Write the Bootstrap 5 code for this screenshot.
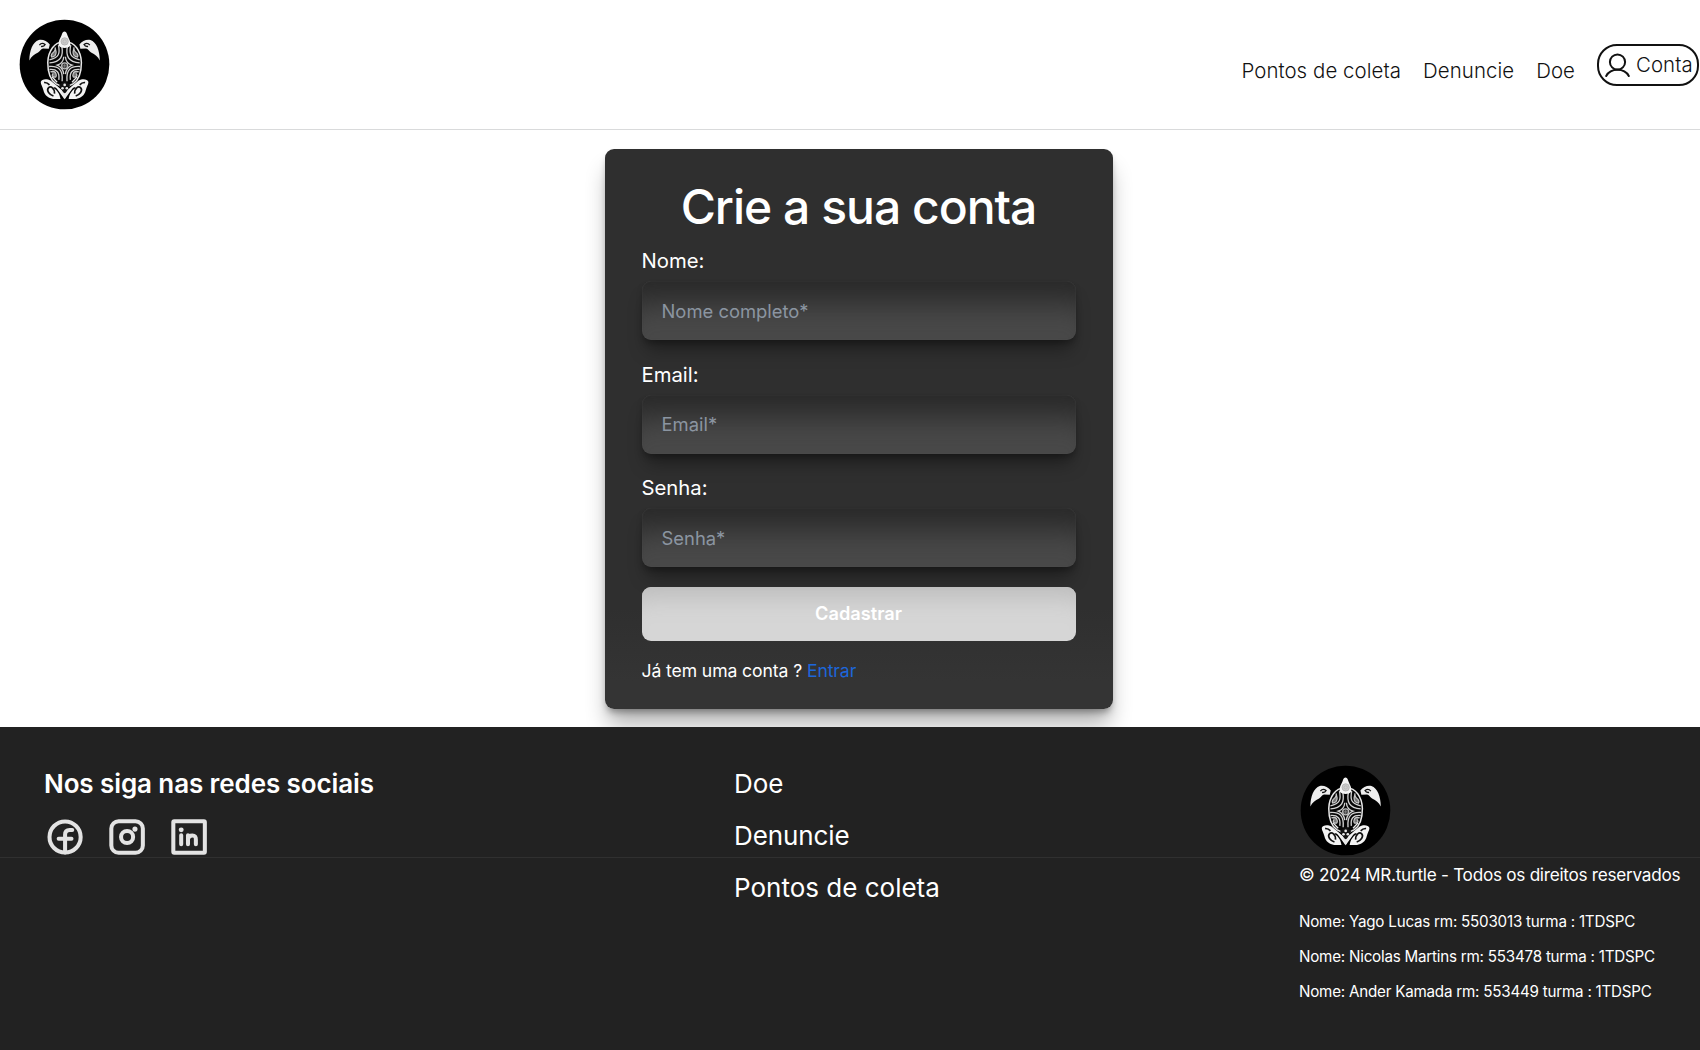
<!DOCTYPE html>
<html lang="pt-br">
<head>
<meta charset="utf-8">
<meta name="viewport" content="width=device-width, initial-scale=1">
<title>MR.turtle - Crie a sua conta</title>
<link rel="stylesheet" href="https://cdn.jsdelivr.net/npm/bootstrap@5.3.0/dist/css/bootstrap.min.css">
<style>
  body { font-family: Inter, "Liberation Sans", sans-serif; background: #fff; color: #fff; height: 1050px; overflow: hidden; }
  .site-head { height: 130px; border-bottom: 1px solid #d9dadb; padding: 19px 1px 0 19px; }
  .turtle { width: 91px; height: 91px; display: block; }
  .site-nav { gap: 22px; padding-top: 25px; font-size: 20.4px; line-height: 30px; }
  .site-nav a { color: #111; font-weight: 350; letter-spacing: .08px; text-decoration: none; white-space: nowrap; }
  .site-nav .plain { margin-top: 12px; }
  .site-nav .account { width: 102px; height: 42px; border: 2px solid #111; border-radius: 20px; padding-left: 6px; gap: 6px; }
  .stage { height: 597px; padding: 19px 0 0 17px; overflow: hidden; }
  .signup { width: 508px; height: 560px; background: linear-gradient(#2f2f2f 0 82%, #343434 95%); border-radius: 9px; padding: 30px 37px 0; box-shadow: 0 18px 22px -3px rgba(0,0,0,.3), 0 5px 7px -2px rgba(0,0,0,.35); }
  .signup h1 { font-size: 48px; font-weight: 500; line-height: 56px; letter-spacing: -1px; margin: 0; }
  .signup label { display: block; font-size: 20.3px; line-height: 30px; }
  .signup .group-box { height: 113.6px; padding-top: 11px; }
  .signup .form-control { height: 59px; margin-top: 5px; border: 0; border-radius: 9px; padding: 0 20px; font-size: 18.4px; color: #fff; background: #494949; box-shadow: inset 0 0 1px 1px rgba(80,80,80,.16), inset 0 45px 30px -24px #292929, 0 14px 18px -5px rgba(0,0,0,.36), 0 4px 6px -1px rgba(0,0,0,.28); }
  .signup .form-control::placeholder { color: #8b95a1; opacity: 1; }
  .signup .send { height: 54px; margin-top: 11px; border: 0; border-radius: 9px; background: #d6d6d6; color: #fff; font-size: 18.2px; font-weight: 600; box-shadow: inset 0 30px 24px -20px #bcbcbc; }
  .signup .login-line { margin: 17.5px 0 0; font-size: 17.6px; line-height: 26px; letter-spacing: -.1px; }
  .signup .login-line a { color: #1d66da; text-decoration: none; }
  .site-foot { height: 323px; background: #222; }
  .foot-upper { height: 131px; border-bottom: 1px solid #303030; }
  .social-col { width: 690px; padding: 41px 0 0 44px; }
  .social-col h2 { font-size: 26px; font-weight: 600; line-height: 32px; letter-spacing: -.1px; margin: 0 0 15px; }
  .social-icons { gap: 18px; }
  .links-col { width: 565px; padding: 41px 0 0 44px; font-size: 26px; line-height: 32px; letter-spacing: -.1px; }
  .links-col a, .link-third { color: #fff; text-decoration: none; display: block; margin-bottom: 20px; }
  .brand-col { padding: 38px 0 0 45px; }
  .foot-lower { font-size: 26px; line-height: 32px; }
  .lower-links { width: 1299px; padding: 14px 0 0 734px; }
  .credits { padding-top: 4px; white-space: nowrap; }
  .credits .rights { font-size: 17.2px; line-height: 26px; letter-spacing: -.28px; margin: 0 0 23.6px; }
  .credits .member { font-size: 15.2px; line-height: 20px; letter-spacing: -.23px; margin: 0 0 15.2px; }
</style>
<script src="https://cdn.jsdelivr.net/npm/bootstrap@5.3.0/dist/js/bootstrap.bundle.min.js"></script>
</head>
<body>
<svg width="0" height="0" class="position-absolute">
  <symbol id="turtle" viewBox="58 57 272 272">
    <circle cx="194" cy="193" r="134" fill="#000"/>
    <g id="half">
      <!-- front flipper -->
      <path d="M150 133C142 123 128 117 117 120C99 126 89 152 89 181C95 169 103 162 115 157C122 152 124 146 130 145L147 146Z" fill="#eee"/>
      <path d="M119 135Q126 126 136 133Q133 140 124 139" fill="none" stroke="#111" stroke-width="4"/>
      <!-- shell pattern -->
      <path d="M194 126C164 123 145 154 144 187C144 215 152 239 168 250L194 263" fill="#050505" stroke="#e8e8e8" stroke-width="4.500"/>
      <path d="M176 135C181 160 178 172 149 179M186 139C191 167 184 186 149 188M148 199C177 197 190 209 187 243M149 208C172 206 180 217 177 239M192 170Q190 190 172 195Q189 202 192 222" fill="none" stroke="#d2d2d2" stroke-width="4"/>
      <path d="M166 142Q168 152 158 159Q152 166 156 171Q169 170 169 156ZM152 215Q166 210 169 222Q172 233 161 230Q154 226 160 220" fill="#777" stroke="#c8c8c8" stroke-width="3.500"/>
      <path d="M157 230L172 246" stroke="#eee" stroke-width="4"/>
      <!-- back flipper -->
      <path d="M145 238C135 236 125 238 123 245C123 253 129 259 131 270C135 286 146 294 160 296H182C180 281 172 269 160 263C163 259 168 261 172 266L194 297V277L172 257L152 241Z" fill="#f4f4f4"/>
      <path d="M133 247Q142 246 149 254M164 280C165 264 153 256 146 263C139 271 149 283 161 287" fill="none" stroke="#111" stroke-width="5"/>
    </g>
    <use href="#half" transform="translate(388.5 0) scale(-1 1)"/>
    <path d="M177 137C174 121 183 114 186 103C189 91 199 91 202 103C205 114 214 122 211 137C204 146 185 146 177 137Z" fill="#f5f5f5"/>
    <circle cx="194.500" cy="124" r="11" fill="#ccc" stroke="#aaa" stroke-width="2"/>
    <circle cx="194.500" cy="124" r="5" fill="none" stroke="#b2b2b2" stroke-width="2"/>
    <circle cx="194.500" cy="197" r="9" fill="#333" stroke="#bbb" stroke-width="4"/>
    <path d="M194.500 191V203M188 197H201" stroke="#999" stroke-width="2"/>
    <path d="M178 254L194.500 242L211 254L194.500 284Z" fill="#111"/>
    <g fill="#e8e8e8"><circle cx="194.500" cy="254" r="4"/><circle cx="188" cy="264" r="4"/><circle cx="201" cy="264" r="4"/><path d="M183 273L194.500 297L206 273L194.500 279Z"/></g>
  </symbol>
</svg>

<header class="site-head d-flex justify-content-between align-items-start">
  <a href="#" aria-label="MR.turtle"><svg class="turtle"><use href="#turtle"/></svg></a>
  <nav class="site-nav d-flex align-items-start">
    <a class="plain" href="#">Pontos de coleta</a>
    <a class="plain" href="#">Denuncie</a>
    <a class="plain" href="#">Doe</a>
    <a class="account d-flex align-items-center" href="#">
      <svg class="flex-shrink-0" width="25" height="25" viewBox="0 0 25 25" fill="none" stroke="#111" stroke-width="2" stroke-linecap="round"><circle cx="12.500" cy="9" r="7.600"/><path d="M1.200 23C5.700 14.800 19.300 14.800 23.800 23"/></svg>
      <span>Conta</span>
    </a>
  </nav>
</header>

<main class="stage d-flex justify-content-center align-items-start">
  <form class="signup">
    <h1 class="text-center">Crie a sua conta</h1>
    <div class="group-box"><label for="nome">Nome:</label><input class="form-control" id="nome" type="text" placeholder="Nome completo*"></div>
    <div class="group-box"><label for="email">Email:</label><input class="form-control" id="email" type="email" placeholder="Email*"></div>
    <div class="group-box"><label for="senha">Senha:</label><input class="form-control" id="senha" type="password" placeholder="Senha*"></div>
    <button class="btn send w-100" type="button">Cadastrar</button>
    <p class="login-line">Já tem uma conta ? <a href="#">Entrar</a></p>
  </form>
</main>

<footer class="site-foot">
  <div class="foot-upper d-flex">
    <section class="social-col">
      <h2>Nos siga nas redes sociais</h2>
      <div class="social-icons d-flex">
        <svg width="44" height="44" viewBox="0 0 24 24" fill="none" stroke="#e3e3e3" stroke-width="2.200"><circle cx="11.500" cy="12" r="8.500"/><path d="M11.500 20.500V10.800Q11.500 8.200 14 8.200H15.400M8 13H15" stroke-linecap="round"/></svg>
        <svg width="44" height="44" viewBox="0 0 24 24" fill="none" stroke="#e3e3e3" stroke-width="2.200"><rect x="2.900" y="3.400" width="17.200" height="17.200" rx="4"/><circle cx="11.500" cy="12" r="3.300"/><circle cx="15.800" cy="7.700" r="1.400" fill="#e3e3e3" stroke="none"/></svg>
        <svg width="44" height="44" viewBox="0 0 24 24" fill="none" stroke="#e3e3e3" stroke-width="2.200"><rect x="2.900" y="3.400" width="17.200" height="17.200" rx=".5"/><path d="M7.200 11V16M10.900 16V11M10.900 13.200Q11.300 11.200 13.300 11.200T15.200 13.500V16" stroke-linecap="round"/><circle cx="7.200" cy="8.100" r="1.350" fill="#e3e3e3" stroke="none"/></svg>
      </div>
    </section>
    <nav class="links-col"><a href="#">Doe</a><a href="#">Denuncie</a></nav>
    <div class="brand-col"><svg class="turtle"><use href="#turtle"/></svg></div>
  </div>
  <div class="foot-lower d-flex">
    <div class="lower-links flex-shrink-0"><a class="link-third" href="#">Pontos de coleta</a></div>
    <div class="credits">
      <p class="rights">© 2024 MR.turtle - Todos os direitos reservados</p>
      <p class="member">Nome: Yago Lucas rm: 5503013 turma : 1TDSPC</p>
      <p class="member">Nome: Nicolas Martins rm: 553478 turma : 1TDSPC</p>
      <p class="member">Nome: Ander Kamada rm: 553449 turma : 1TDSPC</p>
    </div>
  </div>
</footer>
</body>
</html>
